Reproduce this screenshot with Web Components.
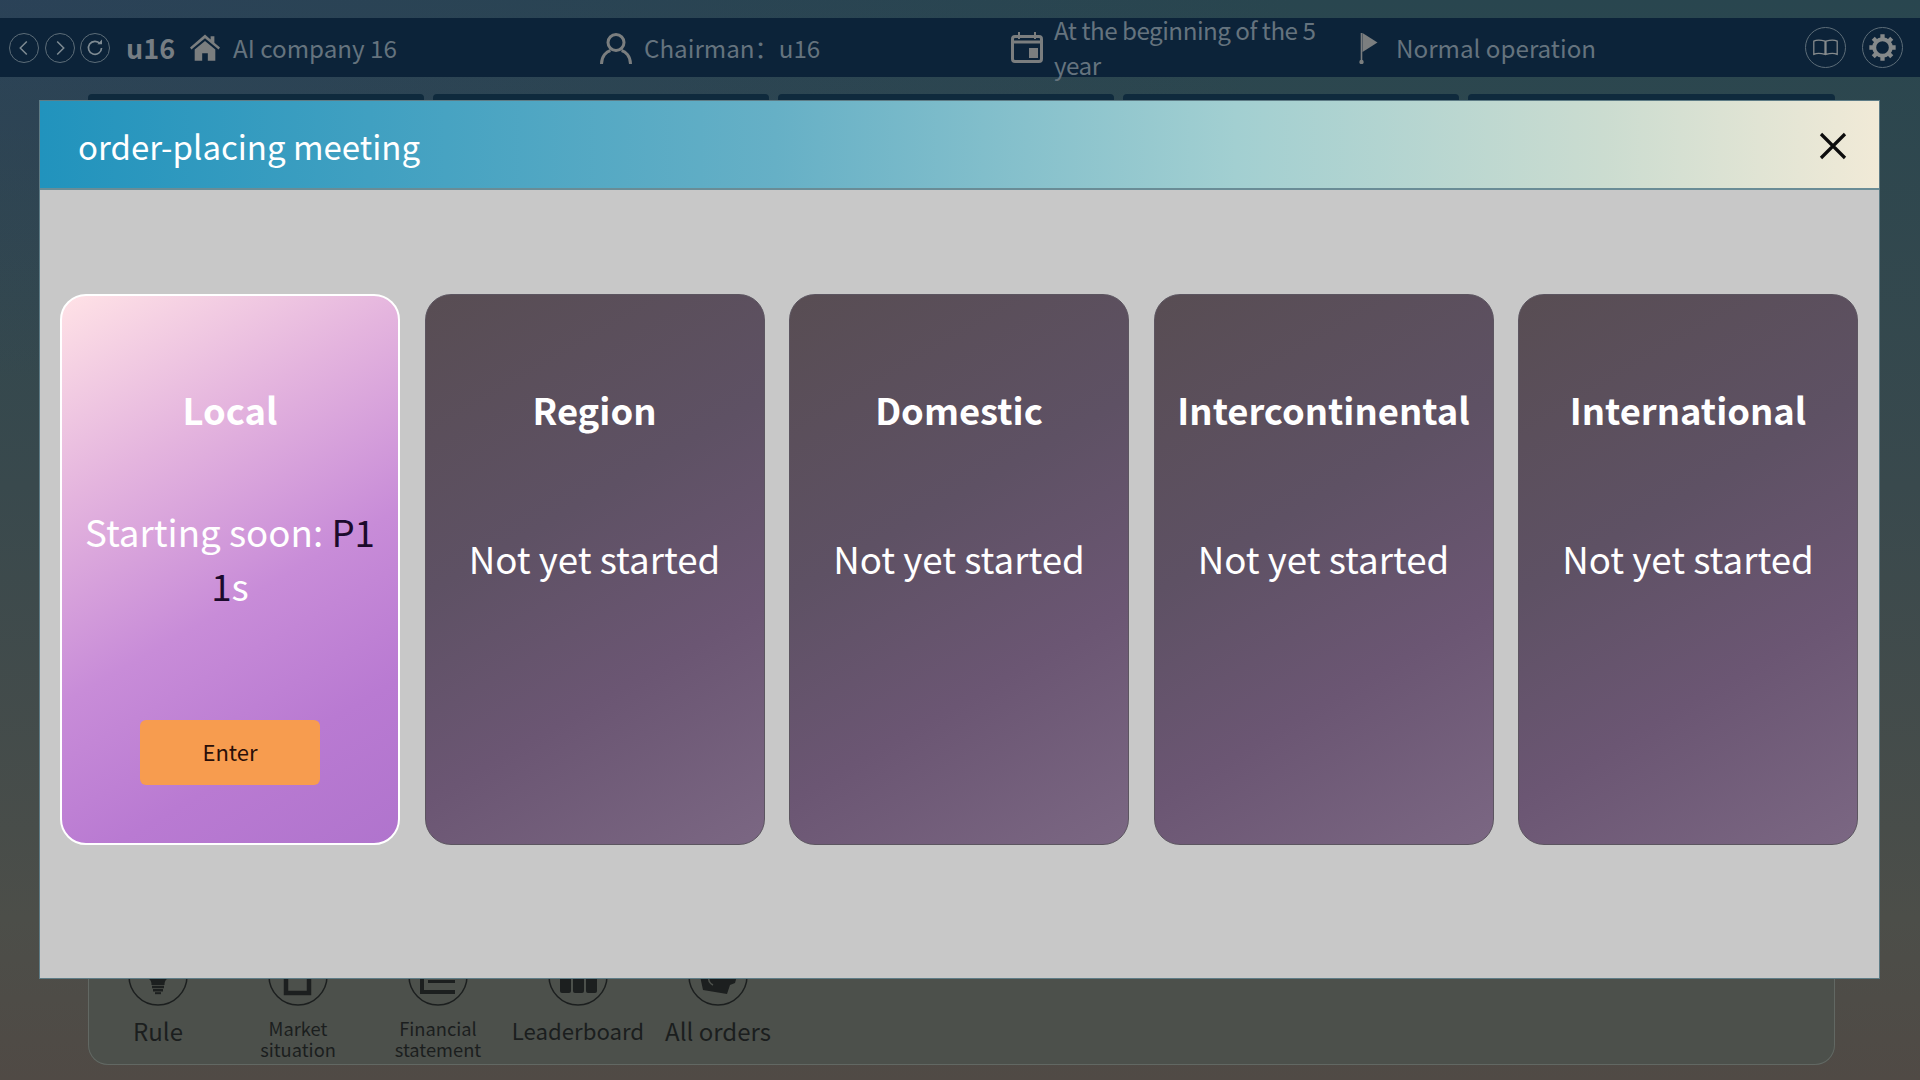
<!DOCTYPE html>
<html lang="en">
<head>
<meta charset="utf-8">
<title>order-placing meeting</title>
<style>
    html, body {
        margin: 0;
        width: 1920px;
        height: 1080px;
        overflow: hidden;
        font-family: "Noto Sans CJK SC", "Noto Sans", sans-serif;
    }
</style>
</head>
<body>
<erp-page>
    <top-nav></top-nav>
    <tab-strip slot="tabs"></tab-strip>
    <tool-dock slot="dock">
        <dock-item icon="rule" label="Rule"></dock-item>
        <dock-item icon="market" label="Market situation" small></dock-item>
        <dock-item icon="finance" label="Financial statement" small></dock-item>
        <dock-item icon="board" label="Leaderboard" narrow></dock-item>
        <dock-item icon="orders" label="All orders"></dock-item>
    </tool-dock>
    <meeting-modal slot="modal" heading="order-placing meeting">
        <market-card name="Local" active>
            Starting soon: <b>P1</b><br><b>1</b>s
            <button-enter slot="action">Enter</button-enter>
        </market-card>
        <market-card name="Region">Not yet started</market-card>
        <market-card name="Domestic">Not yet started</market-card>
        <market-card name="Intercontinental">Not yet started</market-card>
        <market-card name="International">Not yet started</market-card>
    </meeting-modal>
</erp-page>

<script>
const ICONS = {
    back: '<path d="M18 8l-7 7 7 7" fill="none" stroke="#7f8b93" stroke-width="1.6"/>',
    forward: '<path d="M12 8l7 7-7 7" fill="none" stroke="#7f8b93" stroke-width="1.6"/>',
    refresh: '<path d="M20.5 10.5A7 7 0 1 0 22 15" fill="none" stroke="#7f8b93" stroke-width="1.8"/><path d="M17.5 11h5V6z" fill="#7f8b93"/>',
    book: '<path d="M8 13.5c3-1.4 6.5-1.4 11.5 0v13.5c-5-1.4-8.5-1.4-11.5 0zM20.5 13.5c5-1.4 8.5-1.4 11.5 0v13.5c-3-1.4-6.5-1.4-11.5 0z" fill="none" stroke="#868b8d" stroke-width="1.3"/>',
    gear: '<circle cx="20" cy="20" r="8.5" fill="none" stroke="#85898a" stroke-width="4"/><g stroke="#85898a" stroke-width="4.4"><path d="M20 6.5v5M20 28.5v5M6.500 20h5M28.500 20h5M10.500 10.500l3.500 3.500M26 26l3.500 3.500M29.500 10.500L26 14M14 26l-3.500 3.500"/></g>',
    rule: '<path d="M30 11a13 13 0 0 0-8 23c1 1 1.500 2.500 1.500 5h13c0-2.500.5-4 1.500-5a13 13 0 0 0-8-23z" fill="#1c1f1f"/><path d="M24 41h12M25 44.200h10" stroke="#1c1f1f" stroke-width="2.400"/><path d="M27 47.200h6" stroke="#1c1f1f" stroke-width="2"/>',
    market: '<path d="M18 10h23v37H18z" fill="none" stroke="#1c1f1f" stroke-width="4.500"/>',
    finance: '<path d="M14 20v26h33" fill="none" stroke="#1c1f1f" stroke-width="4"/><path d="M20 35.500h27" stroke="#1c1f1f" stroke-width="3"/><path d="M20 31L38 18l9 8v5z" fill="#1c1f1f"/>',
    board: '<rect x="12" y="26" width="11" height="21" rx="2" fill="#1c1f1f"/><rect x="25" y="26" width="11" height="21" rx="2" fill="#1c1f1f"/><rect x="38" y="26" width="11" height="21" rx="2" fill="#1c1f1f"/><rect x="12" y="12" width="37" height="10" rx="2" fill="#1c1f1f"/>',
    orders: '<path d="M12 30h37l-2 7-5 2-3 9-24-4z" fill="#1c1f1f"/><path d="M21 30c-1 4 0 7 4 9" fill="none" stroke="#4c504b" stroke-width="1.500"/><path d="M15 26c2-6 8-11 16-12" fill="none" stroke="#1c1f1f" stroke-width="3"/>'
};

class ErpPage extends HTMLElement {
    constructor() {
        super();
        this.attachShadow({ mode: 'open' });
        this.shadowRoot.innerHTML = `
            <style>
                :host {
                    display: flex;
                    flex-direction: column;
                    position: relative;
                    width: 1920px;
                    height: 1080px;
                    box-sizing: border-box;
                    padding: 18px 0 15px;
                    overflow: hidden;
                    background:
                        radial-gradient(ellipse 1300px 380px at 0 0, rgba(45, 60, 100, 0.4), transparent),
                        linear-gradient(180deg, #29464f 0%, #39494d 45%, #4c4e49 85%, #504a45 100%);
                }
                .content {
                    flex: 1;
                    display: flex;
                    flex-direction: column;
                    justify-content: space-between;
                    padding: 17px 85px 0 88px;
                }
            </style>
            <slot></slot>
            <div class="content">
                <slot name="tabs"></slot>
                <slot name="dock"></slot>
            </div>
            <slot name="modal"></slot>
        `;
    }
}

class NavButton extends HTMLElement {
    constructor() {
        super();
        this.attachShadow({ mode: 'open' });
    }

    connectedCallback() {
        const size = Number(this.getAttribute('size') || 30);
        const box = size === 30 ? 30 : 40;
        this.shadowRoot.innerHTML = `
            <style>
                :host {
                    display: block;
                    width: ${size}px;
                    height: ${size}px;
                    border: 1px solid #5d6d78;
                    border-radius: 50%;
                    box-sizing: border-box;
                    flex: none;
                }
                svg { display: block; width: 100%; height: 100%; }
            </style>
            <svg viewBox="0 0 ${box} ${box}">${ICONS[this.getAttribute('icon')]}</svg>
        `;
    }
}

class TopNav extends HTMLElement {
    constructor() {
        super();
        this.attachShadow({ mode: 'open' });
        this.shadowRoot.innerHTML = `
            <style>
                :host {
                    display: flex;
                    align-items: center;
                    height: 59px;
                    flex: none;
                    background: #0c2339;
                    color: #65737e;
                    font-size: 24.2px;
                    line-height: 35px;
                    padding-left: 9px;
                }
                .seg { display: flex; align-items: center; flex: none; }
                .seg svg { flex: none; display: block; }
                .one { width: 591px; }
                .two { width: 411px; }
                .three { width: 347px; }
                .four { flex: 1; }
                .btns { display: flex; gap: 5.5px; }
                .user {
                    font-size: 27px;
                    font-weight: 700;
                    color: #767d83;
                    margin: 0 15px 0 16px;
                }
                .gap { margin-left: 12px; }
                .company { margin-left: 13px; }
                .when {
                    width: 275px;
                    margin-left: 11px;
                    letter-spacing: -0.5px;
                    margin-top: -1px;
                }
                .tools { display: flex; gap: 16px; padding-right: 17px; }
            </style>
            <div class="seg one">
                <div class="btns">
                    <nav-button icon="back"></nav-button>
                    <nav-button icon="forward"></nav-button>
                    <nav-button icon="refresh"></nav-button>
                </div>
                <span class="user">u16</span>
                <svg width="30" height="27" viewBox="0 0 32 28">
                    <path d="M16 0L0 14l1.5 2L16 4l14.500 12 1.500-2-6-5V2h-4v3.500z" fill="#7b7e7f"/>
                    <path d="M5 16L16 7l11 9v12h-8v-8h-6v8H5z" fill="#7b7e7f"/>
                </svg>
                <span class="company">AI company 16</span>
            </div>
            <div class="seg two">
                <svg width="32" height="32" viewBox="0 0 32 32">
                    <circle cx="16" cy="10.5" r="8" fill="none" stroke="#7b7e7f" stroke-width="3"/>
                    <path d="M1.500 32c0-8 5-12.500 9-13.500M30.500 32c0-8-5-12.500-9-13.500" fill="none" stroke="#7b7e7f" stroke-width="3"/>
                </svg>
                <span class="gap">Chairman：u16</span>
            </div>
            <div class="seg three">
                <svg width="32" height="31" viewBox="0 0 32 31">
                    <rect x="1.5" y="4.5" width="29" height="25" rx="2.5" fill="none" stroke="#7b7e7f" stroke-width="3"/>
                    <path d="M1.5 10h29" stroke="#7b7e7f" stroke-width="3"/>
                    <path d="M8 0v7M24 0v7" stroke="#7b7e7f" stroke-width="2"/>
                    <rect x="18" y="16" width="9" height="10" fill="#7b7e7f"/>
                </svg>
                <span class="when">At the beginning of the 5 year</span>
            </div>
            <div class="seg four">
                <svg width="22" height="32" viewBox="0 0 22 32">
                    <path d="M3.500 1v29" stroke="#7b7e7f" stroke-width="1.600"/>
                    <circle cx="3.500" cy="30" r="2.200" fill="#7b7e7f"/>
                    <path d="M4.500 1l15 9.500L4.500 20z" fill="#7b7e7f"/>
                </svg>
                <span class="gap" style="margin-left:16px">Normal operation</span>
            </div>
            <div class="tools">
                <nav-button icon="book" size="41"></nav-button>
                <nav-button icon="gear" size="41"></nav-button>
            </div>
        `;
    }
}

class TabStrip extends HTMLElement {
    constructor() {
        super();
        this.attachShadow({ mode: 'open' });
        this.shadowRoot.innerHTML = `
            <style>
                :host { display: flex; gap: 9px; height: 40px; }
                div { width: 336px; flex: none; background: #0f2a3d; border-radius: 4px 4px 0 0; }
                div:last-child { width: auto; flex: 1; }
            </style>
            <div></div><div></div><div></div><div></div><div></div>
        `;
    }
}

class ToolDock extends HTMLElement {
    constructor() {
        super();
        this.attachShadow({ mode: 'open' });
        this.shadowRoot.innerHTML = `
            <style>
                :host {
                    display: flex;
                    box-sizing: border-box;
                    height: 190px;
                    padding-top: 71px;
                    box-shadow: inset 0 0 0 1px #626863;
                    border-radius: 20px;
                    background: #4c504b;
                }
            </style>
            <slot></slot>
        `;
    }
}

class DockItem extends HTMLElement {
    constructor() {
        super();
        this.attachShadow({ mode: 'open' });
    }

    connectedCallback() {
        const small = this.hasAttribute('small');
        const narrow = this.hasAttribute('narrow');
        this.shadowRoot.innerHTML = `
            <style>
                :host {
                    display: flex;
                    flex-direction: column;
                    align-items: center;
                    width: 140px;
                    flex: none;
                    color: #1b1e1e;
                    text-align: center;
                }
                svg { display: block; width: 60px; height: 60px; margin-bottom: 8px; }
                .label { font-size: 24px; line-height: 34px; white-space: nowrap; }
                .label.narrow { font-size: 22.2px; line-height: 32px; }
                .label.small {
                    font-size: 18.3px;
                    line-height: 21px;
                    padding-top: 4px;
                    white-space: normal;
                    width: 100px;
                }
            </style>
            <svg viewBox="0 0 60 60">
                <circle cx="30" cy="30" r="29" fill="none" stroke="#1c1f1f" stroke-width="1.5"/>
                ${ICONS[this.getAttribute('icon')]}
            </svg>
            <div class="label ${small ? 'small' : ''} ${narrow ? 'narrow' : ''}">${this.getAttribute('label')}</div>
        `;
    }
}

class MeetingModal extends HTMLElement {
    constructor() {
        super();
        this.attachShadow({ mode: 'open' });
    }

    connectedCallback() {
        this.shadowRoot.innerHTML = `
            <style>
                :host {
                    position: absolute;
                    left: 40px;
                    top: 101px;
                    width: 1839px;
                    height: 877px;
                    display: flex;
                    flex-direction: column;
                    background: #c8c8c8;
                    box-shadow: 0 0 0 1px #5e7c86;
                }
                header {
                    display: flex;
                    align-items: center;
                    justify-content: space-between;
                    height: 89px;
                    flex: none;
                    box-sizing: border-box;
                    padding: 2px 32px 0 38px;
                    border-bottom: 2px solid #6a8c96;
                    background: linear-gradient(90deg, #2193bd 0%, #66b0c6 40%, #a2cfd1 65%, #cbdcd0 85%, #f1ead7 100%);
                    color: #fff;
                    font-size: 33px;
                }
                svg { display: block; margin-top: 1px; }
                .cards {
                    display: grid;
                    grid-template-columns: repeat(5, 340px);
                    justify-content: space-between;
                    height: 551px;
                    padding: 104px 21px 0 20px;
                }
            </style>
            <header>
                <span>${this.getAttribute('heading')}</span>
                <svg width="28" height="28" viewBox="0 0 28 28">
                    <path d="M2 2l24 24M26 2L2 26" stroke="#0c0c0c" stroke-width="3.2" fill="none"/>
                </svg>
            </header>
            <div class="cards"><slot></slot></div>
        `;
    }
}

class MarketCard extends HTMLElement {
    constructor() {
        super();
        this.attachShadow({ mode: 'open' });
    }

    connectedCallback() {
        const active = this.hasAttribute('active');
        const background = active
            ? 'linear-gradient(150deg, #ffe2e6 0%, #e4b4de 28%, #c88cd8 55%, #b97ad2 78%, #b074cd 100%)'
            : 'linear-gradient(150deg, #584d53 0%, #5e5164 40%, #6b5673 68%, #7b6783 100%)';
        const border = active ? '2px solid #fff' : '1px solid #5c5560';
        this.shadowRoot.innerHTML = `
            <style>
                :host {
                    display: flex;
                    flex-direction: column;
                    align-items: center;
                    box-sizing: border-box;
                    height: 551px;
                    padding-top: ${active ? 85.5 : 86.5}px;
                    border: ${border};
                    border-radius: 26px;
                    background: ${background};
                    color: #fff;
                    text-align: center;
                }
                h2 {
                    margin: 0;
                    font-size: 36.4px;
                    line-height: 54px;
                    font-weight: 700;
                }
                .status {
                    display: flex;
                    align-items: center;
                    justify-content: center;
                    height: 244px;
                    font-size: 36.7px;
                    line-height: 54px;
                }
                ::slotted(b) { font-weight: 400; color: #1c0a2c; }
                .action { margin-top: 40.5px; }
            </style>
            <h2>${this.getAttribute('name')}</h2>
            <div class="status"><div><slot></slot></div></div>
            <div class="action"><slot name="action"></slot></div>
        `;
    }
}

class ButtonEnter extends HTMLElement {
    constructor() {
        super();
        this.attachShadow({ mode: 'open' });
        this.shadowRoot.innerHTML = `
            <style>
                :host {
                    display: flex;
                    align-items: center;
                    justify-content: center;
                    box-sizing: border-box;
                    width: 180px;
                    height: 65px;
                    padding-bottom: 4px;
                    border-radius: 6px;
                    background: #f79c4f;
                    color: #2a0f08;
                    font-size: 22px;
                }
            </style>
            <slot></slot>
        `;
    }
}

customElements.define('erp-page', ErpPage);
customElements.define('nav-button', NavButton);
customElements.define('top-nav', TopNav);
customElements.define('tab-strip', TabStrip);
customElements.define('tool-dock', ToolDock);
customElements.define('dock-item', DockItem);
customElements.define('meeting-modal', MeetingModal);
customElements.define('market-card', MarketCard);
customElements.define('button-enter', ButtonEnter);
</script>
</body>
</html>
